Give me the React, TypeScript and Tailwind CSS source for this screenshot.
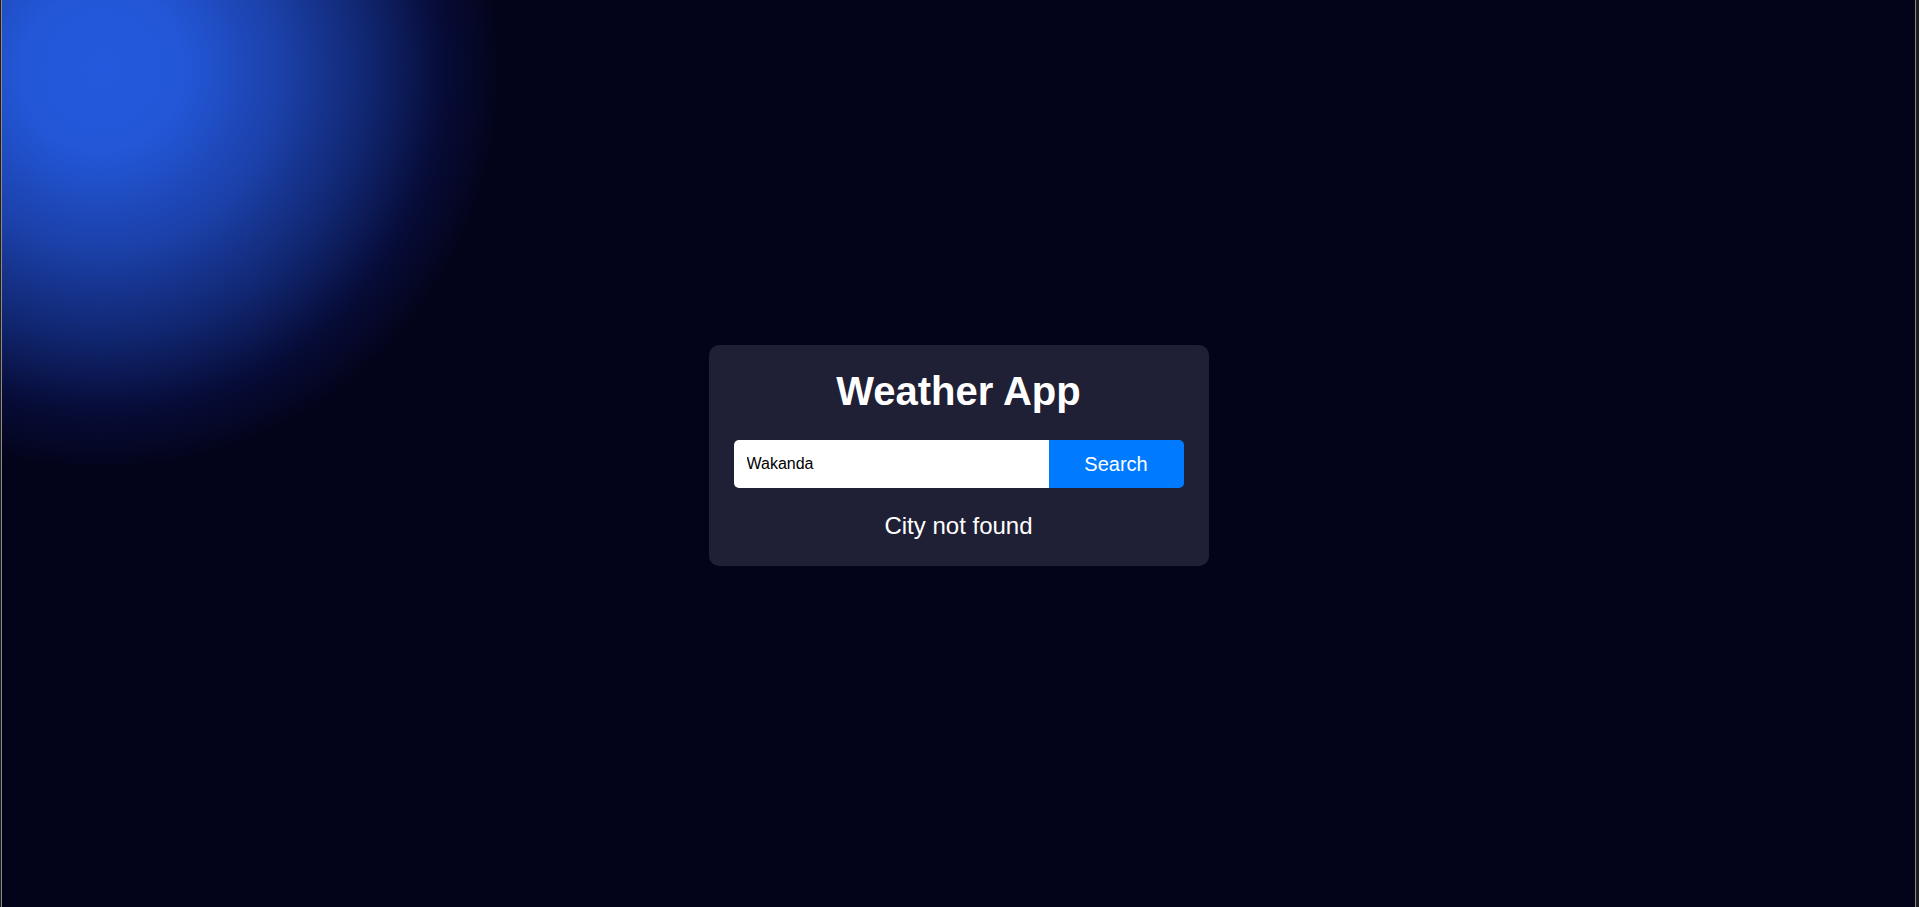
import React, { useState } from 'react';

export default function App() {
  const [city, setCity] = useState('Wakanda');

  return (
    <div className="flex h-screen w-full bg-[#1e1e1e] font-['Liberation_Sans',Arial,sans-serif]">
      <div className="relative ml-[1px] mr-[3px] flex flex-1 items-center justify-center overflow-hidden border-x border-[#8a8a8a] bg-[#03041a] pt-[4px]">
        <div className="pointer-events-none absolute inset-0 bg-[radial-gradient(circle_at_100px_70px,#2459dd_0px,#2357d8_80px,#1b40a8_180px,#10256e_270px,#070c38_340px,#03041a_400px)]" />

        <div className="relative w-[500px] rounded-[10px] bg-[#1f2035] px-[25px] pb-[26px] pt-[23px]">
          <h1 className="text-center text-[40px] font-bold leading-[46px] text-white">Weather App</h1>

          <form className="mt-[26px] flex h-[48px]" onSubmit={(e) => e.preventDefault()}>
            <input
              value={city}
              onChange={(e) => setCity(e.target.value)}
              className="min-w-0 flex-1 rounded-l-[5px] bg-white pl-[13px] text-[16px] text-black outline-none"
            />
            <button type="submit" className="w-[135px] rounded-r-[5px] bg-[#007bff] text-[20px] text-white">
              Search
            </button>
          </form>

          <p className="mt-[24px] text-center text-[24px] leading-[28px] text-white">City not found</p>
        </div>
      </div>
    </div>
  );
}
